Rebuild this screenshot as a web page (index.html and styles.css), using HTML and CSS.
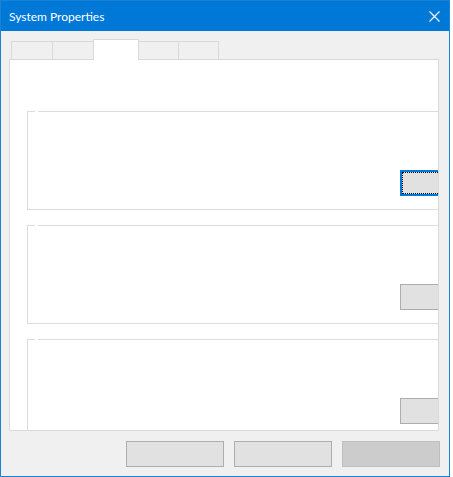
FILE: index.html
```html
<!DOCTYPE html>
<html>
<head>
<meta charset="utf-8">
<title>System Properties</title>
<link rel="stylesheet" href="styles.css">
</head>
<body>
<div class="window">
  <div class="titlebar">
    <span class="title">System Properties</span>
    <svg class="close" width="11" height="11" viewBox="0 0 11 11"><path d="M0.5 0.5 L10.5 10.5 M10.5 0.5 L0.5 10.5" stroke="#fff" stroke-width="1.1" fill="none"/></svg>
  </div>
  <div class="tabstrip">
    <div class="tab tab-a"></div>
    <div class="tab tab-a"></div>
    <div class="tab tab-selected"></div>
    <div class="tab tab-b"></div>
    <div class="tab tab-b"></div>
  </div>
  <div class="panel">
    <div class="group">
      <span class="legend-gap"></span>
      <div class="btn btn-focus"></div>
    </div>
    <div class="group">
      <span class="legend-gap"></span>
      <div class="btn"></div>
    </div>
    <div class="group">
      <span class="legend-gap"></span>
      <div class="btn"></div>
    </div>
  </div>
  <div class="buttons">
    <div class="dlg-btn"></div>
    <div class="dlg-btn"></div>
    <div class="dlg-btn dlg-btn-disabled"></div>
  </div>
</div>
</body>
</html>
```
FILE: styles.css
```css
html, body {
  margin: 0;
  padding: 0;
  background: #ffffff;
}
.window {
  box-sizing: border-box;
  width: 450px;
  height: 477px;
  border: 1px solid #1883d7;
  background: #f0f0f0;
  display: flex;
  flex-direction: column;
  font-family: "Segoe UI", Lato, "Noto Sans", sans-serif;
}
.titlebar {
  height: 30px;
  flex: none;
  background: #0078d7;
  display: flex;
  align-items: center;
  justify-content: space-between;
  padding: 0 9px 0 8px;
}
.title {
  color: #ffffff;
  font-size: 12px;
  line-height: 14px;
  margin-top: 1px;
}
.close {
  display: block;
  margin-top: 0px;
}
.tabstrip {
  flex: none;
  margin-top: 8px;
  height: 20px;
  display: flex;
  align-items: flex-end;
  padding-left: 10px;
}
.tab {
  box-sizing: border-box;
  height: 18px;
  border: 1px solid #d9d9d9;
  border-bottom: none;
  background: #f0f0f0;
}
.tab + .tab {
  margin-left: -1px;
}
.tab-a { width: 42px; }
.tab-b { width: 41px; }
.tab-selected {
  position: relative;
  z-index: 2;
  width: 46px;
  height: 21px;
  margin-bottom: -1px;
  background: #ffffff;
}
.panel {
  box-sizing: border-box;
  flex: none;
  margin-left: 8px;
  width: 430px;
  height: 372px;
  border: 1px solid #d9d9d9;
  background: #ffffff;
  overflow: hidden;
  padding: 51px 0 0 17px;
  display: flex;
  flex-direction: column;
  gap: 15px;
}
.group {
  position: relative;
  box-sizing: border-box;
  flex: none;
  width: 430px;
  height: 99px;
  border: 1px solid #dcdcdc;
  padding: 58px 0 0 372px;
}
.legend-gap {
  position: absolute;
  top: -1px;
  left: 7px;
  width: 3px;
  height: 1px;
  background: #ffffff;
}
.btn {
  box-sizing: border-box;
  width: 48px;
  height: 26px;
  background: #e1e1e1;
  border: 1px solid #adadad;
}
.btn-focus {
  border: 2px solid #0078d7;
  outline: 1px dotted #000000;
  outline-offset: -3px;
}
.buttons {
  flex: none;
  margin-top: 10px;
  display: flex;
  justify-content: flex-end;
  gap: 10px;
  padding-right: 9px;
}
.dlg-btn {
  box-sizing: border-box;
  width: 98px;
  height: 26px;
  background: #e1e1e1;
  border: 1px solid #adadad;
}
.dlg-btn-disabled {
  background: #cccccc;
  border-color: #bfbfbf;
}
```
